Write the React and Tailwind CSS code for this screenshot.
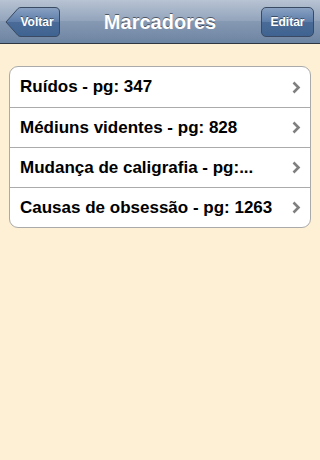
import React from 'react';

const items = [
  'Ruídos - pg: 347',
  'Médiuns videntes - pg: 828',
  'Mudança de caligrafia - pg:...',
  'Causas de obsessão - pg: 1263',
];

const Chevron = () => (
  <svg width="9" height="13" viewBox="0 0 9 13" className="shrink-0">
    <path d="M1.5 1.5 L6.5 6.5 L1.5 11.5" fill="none" stroke="#7f7f7f" strokeWidth="2.6" />
  </svg>
);

const App = () => {
  return (
    <div
      className="w-[320px] h-[460px] bg-[#fdf0d5] flex flex-col"
      style={{ fontFamily: '"Liberation Sans", Arial, sans-serif' }}
    >
      <div className="h-[44px] shrink-0 relative flex items-center justify-center border-b border-[#2d3642] bg-[linear-gradient(to_bottom,#b8c3d3_0%,#91a3bb_50%,#8699b3_50%,#6d84a2_100%)]">
        <div className="absolute left-[5px] top-[7px] w-[55px] h-[30px]">
          <svg width="55" height="30" viewBox="0 0 55 30" className="absolute inset-0">
            <defs>
              <linearGradient id="bk" x1="0" y1="0" x2="0" y2="1">
                <stop offset="0" stopColor="#8aa2c3" />
                <stop offset="0.5" stopColor="#5c7ca8" />
                <stop offset="0.5" stopColor="#4a6b98" />
                <stop offset="1" stopColor="#3f6391" />
              </linearGradient>
            </defs>
            <path
              d="M1 15 L13 1.5 Q14 0.5 16 0.5 L50 0.5 Q54.5 0.5 54.5 5 L54.5 25 Q54.5 29.5 50 29.5 L16 29.5 Q14 29.5 13 28.5 Z"
              fill="url(#bk)"
              stroke="#3a4a62"
            />
          </svg>
          <span className="relative flex h-full items-center justify-center pl-[9px] text-[12px] font-bold text-white [text-shadow:0_-1px_0_rgba(0,0,0,0.45)]">
            Voltar
          </span>
        </div>
        <h1 className="text-[20px] font-bold text-white [text-shadow:0_-1px_0_rgba(0,0,0,0.5)]">Marcadores</h1>
        <button className="absolute right-[6px] top-[7px] w-[53px] h-[30px] rounded-[5px] border border-[#3a4a62] bg-[linear-gradient(to_bottom,#8aa2c3_0%,#5c7ca8_50%,#4a6b98_50%,#3f6391_100%)] text-[12px] font-bold text-white [text-shadow:0_-1px_0_rgba(0,0,0,0.45)]">
          Editar
        </button>
      </div>

      <div className="mx-[9px] mt-[22px] rounded-[9px] border border-[#aaaaaa] bg-white overflow-hidden">
        {items.map((t, i) => (
          <div
            key={i}
            className={`h-[40px] flex items-center pl-[10px] pr-[9px] ${i > 0 ? 'border-t border-[#ababab]' : ''}`}
          >
            <span className="flex-1 truncate text-[17px] font-bold text-black pr-[14px]">{t}</span>
            <Chevron />
          </div>
        ))}
      </div>
    </div>
  );
};

export default App;
